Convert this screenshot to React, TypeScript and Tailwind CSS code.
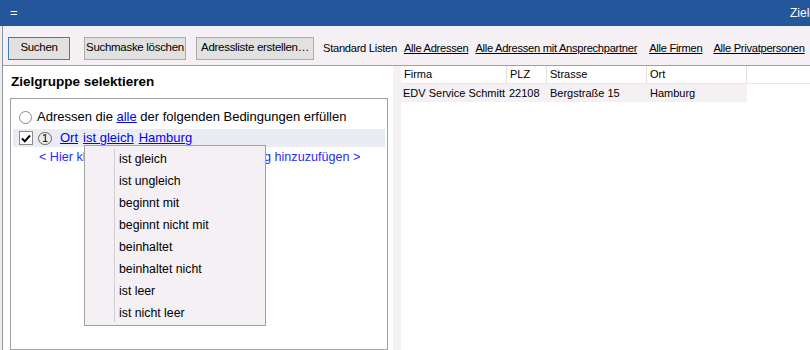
import React from "react"

const ui = { fontFamily: '"Liberation Sans", Arial, sans-serif' }

const operators = [
  "ist gleich",
  "ist ungleich",
  "beginnt mit",
  "beginnt nicht mit",
  "beinhaltet",
  "beinhaltet nicht",
  "ist leer",
  "ist nicht leer",
]

const links = [
  { label: "Alle Adressen", ml: "ml-[7px]" },
  { label: "Alle Adressen mit Ansprechpartner", ml: "ml-[7px]" },
  { label: "Alle Firmen", ml: "ml-[12px]" },
  { label: "Alle Privatpersonen", ml: "ml-[11px]" },
]

function ToolButton({ label, w, focused }: { label: string; w: string; focused?: boolean }) {
  return (
    <button
      className={`${w} h-[23px] shrink-0 whitespace-nowrap bg-[#e1e1e1] text-[11.5px] text-black border ${
        focused ? "border-[#3b7ebf]" : "border-[#adadad]"
      }`}
    >
      {label}
    </button>
  )
}

export default function App() {
  return (
    <div className="relative w-[810px] h-[350px] overflow-hidden bg-white text-black" style={ui}>
      {/* title bar */}
      <div className="h-[26px] bg-[#23569b] flex items-center justify-between text-white">
        <span className="ml-[10px] text-[13px]">=</span>
        <span className="text-[12px] -mr-[6px]">Zielg</span>
      </div>

      <div className="flex h-[324px]">
        {/* edge of window behind */}
        <div className="w-[3px] bg-[#f2eee6] border-r border-[#8a97a8] shrink-0" />

        <div className="flex-1 min-w-0 flex flex-col">
          {/* toolbar */}
          <div className="h-[40px] bg-[#f4f0f4] border-b border-[#a0a0a0] flex items-center pt-[5px] pl-[5px] text-[11.2px] tracking-[-0.3px] whitespace-nowrap overflow-hidden">
            <ToolButton label="Suchen" w="w-[62px]" focused />
            <div className="ml-[14px] shrink-0">
              <ToolButton label="Suchmaske löschen" w="w-[102px]" />
            </div>
            <div className="ml-[10px] shrink-0">
              <ToolButton label="Adressliste erstellen…" w="w-[118px]" />
            </div>
            <span className="ml-[9px] shrink-0">Standard Listen</span>
            {links.map((l) => (
              <span key={l.label} className={`${l.ml} shrink-0 underline`}>
                {l.label}
              </span>
            ))}
          </div>

          <div className="flex flex-1 min-h-0">
            {/* left panel */}
            <div className="w-[390px] shrink-0 flex flex-col overflow-hidden">
              <div className="pl-[8px] pt-[6px] h-[33px] text-[13.5px] font-bold">Zielgruppe selektieren</div>
              <div className="ml-[7px] mr-[5px] h-[260px] border border-[#a0a0a0] text-[13px]">
                <div className="mt-[9px] h-[18px] flex items-center pl-[8px]">
                  <span className="w-[13px] h-[13px] rounded-full border border-[#8a8a8a] bg-white shrink-0" />
                  <span className="ml-[5px] whitespace-nowrap">
                    Adressen die <span className="text-[#0000ff] underline">alle</span> der folgenden Bedingungen erfüllen
                  </span>
                </div>
                <div className="mt-[3px] mx-[2px] h-[18px] bg-[#ebebf4] flex items-center pl-[6px]">
                  <span className="w-[14px] h-[14px] border border-[#8a8a8a] bg-white flex items-center justify-center">
                    <svg width="10" height="9" viewBox="0 0 10 9">
                      <path d="M1 4.5 L3.8 7.3 L9 1.5" fill="none" stroke="#000" strokeWidth="2" />
                    </svg>
                  </span>
                  <span className="ml-[5px] w-[14px] h-[13px] rounded-full border border-[#666] flex items-center justify-center text-[11px] leading-none">
                    1
                  </span>
                  <span className="ml-[8px] text-[#0000ff] underline">Ort</span>
                  <span className="ml-[5px] text-[#0000ff] underline">ist gleich</span>
                  <span className="ml-[5px] text-[#0000ff] underline">Hamburg</span>
                </div>
                <div className="h-[20px] flex items-center pl-[28px] text-[12.6px] text-[#2a2aff] whitespace-nowrap">
                  &lt; Hier klicken um eine weitere Bedingung hinzuzufügen &gt;
                </div>
              </div>
            </div>

            {/* splitter */}
            <div className="w-[8px] shrink-0 bg-[#f4f0f4]" />

            {/* result table */}
            <div className="flex-1 bg-white text-[11px]">
              <div className="flex h-[18px] border-b border-[#e6e6e6]">
                <div className="w-[106px] border-r border-[#e0e0e0] pl-[3px] flex items-center">Firma</div>
                <div className="w-[40px] border-r border-[#e0e0e0] pl-[3px] flex items-center">PLZ</div>
                <div className="w-[100px] border-r border-[#e0e0e0] pl-[3px] flex items-center">Strasse</div>
                <div className="w-[100px] border-r border-[#e0e0e0] pl-[3px] flex items-center">Ort</div>
              </div>
              <div className="flex h-[18px] w-[346px] bg-[#f4f0f4]">
                <div className="w-[106px] pl-[2px] flex items-center whitespace-nowrap">EDV Service Schmitt</div>
                <div className="w-[40px] pl-[2px] flex items-center">22108</div>
                <div className="w-[100px] pl-[3px] flex items-center">Bergstraße 15</div>
                <div className="w-[100px] pl-[3px] flex items-center">Hamburg</div>
              </div>
            </div>
          </div>
        </div>
      </div>

      {/* operator dropdown menu */}
      <div className="absolute left-[84px] top-[145px] w-[182px] h-[181px] bg-[#f4f0f4] border border-[#a0a0a0] pt-[2px] text-[12.3px]">
        <div className="absolute left-[29px] top-[3px] bottom-[3px] w-px bg-[#cfcfcf]" />
        {operators.map((op) => (
          <div key={op} className="h-[22px] flex items-center pl-[34px]">
            {op}
          </div>
        ))}
      </div>
    </div>
  )
}
